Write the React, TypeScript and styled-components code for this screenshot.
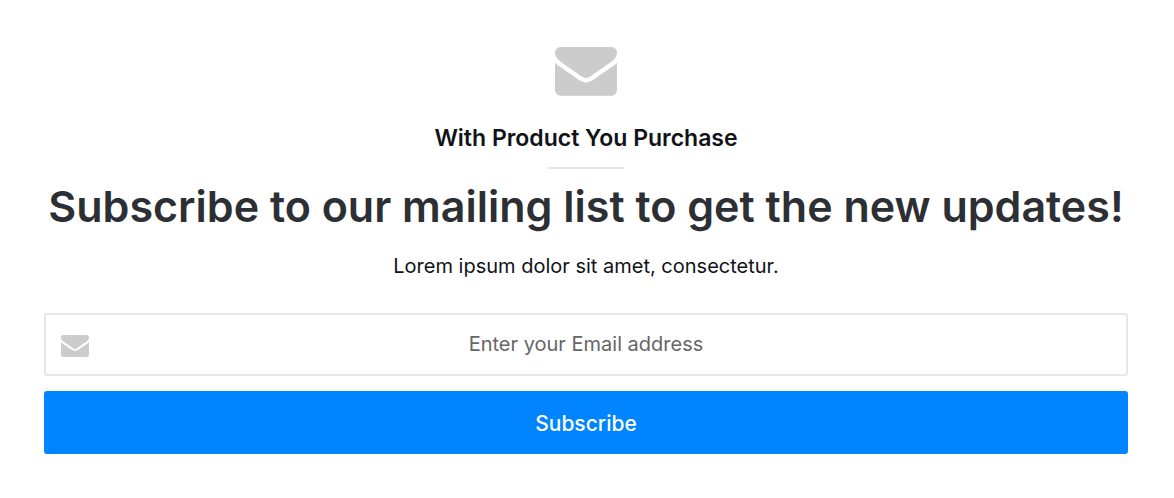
import React from "react";
import styled, { createGlobalStyle } from "styled-components";

const GlobalStyle = createGlobalStyle`
  *, *::before, *::after { box-sizing: border-box; }
  body { margin: 0; background: #fff; }
`;

const Widget = styled.section`
  display: flex;
  flex-direction: column;
  align-items: center;
  padding: 47px 46px 44px 44px;
  font-family: Inter, "Liberation Sans", sans-serif;
  text-align: center;
  color: #111318;
`;

const Icon = styled.svg<{ $width: number }>`
  display: block;
  flex: none;
  width: ${(p) => p.$width}px;
  fill: #ccc;
`;

const Eyebrow = styled.h4`
  margin: 26px 0 0;
  font-size: 23px;
  line-height: 32px;
  font-weight: 600;
`;

const Divider = styled.hr`
  width: 76px;
  height: 2px;
  margin: 13px 0 0;
  border: 0;
  background: #e6e6e6;
`;

const Heading = styled.h3`
  margin: 7px 0 0;
  font-size: 43px;
  line-height: 60px;
  font-weight: 600;
  color: #2c2f34;
`;

const Description = styled.p`
  margin: 14px 0 0;
  font-size: 20px;
  line-height: 32px;
`;

const Form = styled.form`
  display: flex;
  flex-direction: column;
  gap: 15px;
  width: 100%;
  margin-top: 31px;
`;

const Field = styled.label`
  display: flex;
  align-items: center;
  height: 63px;
  padding: 4px 15px 0;
  border: 2px solid #e6e6e6;
  border-radius: 3px;
`;

const EmailInput = styled.input`
  flex: 1;
  min-width: 0;
  height: 100%;
  padding: 0 28px 4px 0;
  border: 0;
  outline: 0;
  background: transparent;
  font: inherit;
  font-size: 20px;
  text-align: center;
  &::placeholder { color: #666; opacity: 1; }
`;

const SubmitButton = styled.button`
  height: 63px;
  padding: 2px 0 0;
  border: 0;
  border-radius: 3px;
  background: #0084ff;
  color: #fff;
  font: inherit;
  font-size: 21px;
  font-weight: 500;
  cursor: pointer;
`;

const Envelope = ({ width }: { width: number }) => (
  <Icon $width={width} viewBox="0 256 1792 1408" aria-hidden="true">
    <path d="M1792 710v794q0 66-47 113t-113 47h-1472q-66 0-113-47t-47-113v-794q44 49 101 87 362 246 497 345 57 42 92.5 65.5t94.5 48 110 24.5h2q51 0 110-24.5t94.5-48 92.5-65.5q170-123 498-345 57-39 100-87zm0-294q0 79-49 151t-122 123q-376 261-468 325-10 7-42.5 31t-54 38.5-52 32.5-57.5 27-50 9h-2q-23 0-50-9t-57.5-27-52-32.5-54-38.5-42.5-31q-91-64-262-182.5t-205-142.5q-62-42-117-115.5t-55-136.5q0-78 41.5-130t118.5-52h1472q65 0 112.5 47t47.5 113z" />
  </Icon>
);

export default function App() {
  return (
    <>
      <GlobalStyle />
      <Widget>
        <Envelope width={62} />
        <Eyebrow>With Product You Purchase</Eyebrow>
        <Divider />
        <Heading>Subscribe to our mailing list to get the new updates!</Heading>
        <Description>Lorem ipsum dolor sit amet, consectetur.</Description>
        <Form onSubmit={(e) => e.preventDefault()}>
          <Field>
            <Envelope width={28} />
            <EmailInput type="email" placeholder="Enter your Email address" aria-label="Enter your Email address" />
          </Field>
          <SubmitButton type="submit">Subscribe</SubmitButton>
        </Form>
      </Widget>
    </>
  );
}
